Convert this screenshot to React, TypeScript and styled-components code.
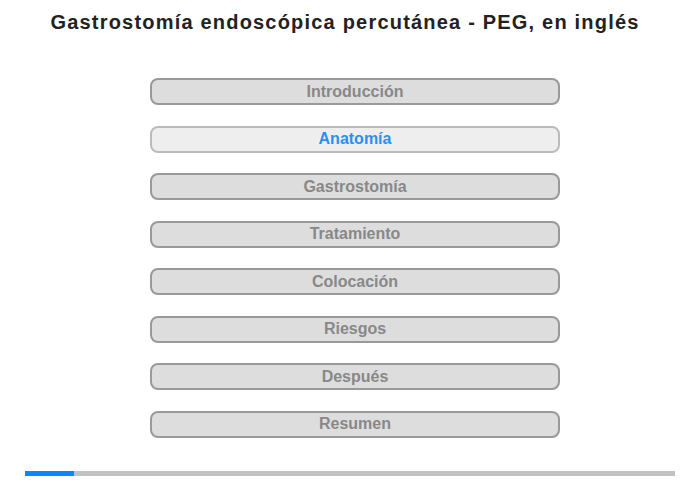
import React from "react";
import styled, { createGlobalStyle } from "styled-components";

const GlobalStyle = createGlobalStyle`
  html, body {
    margin: 0;
    padding: 0;
    background: #fff;
  }
  body {
    font-family: "Liberation Sans", Arial, sans-serif;
  }
`;

const Page = styled.div`
  width: 700px;
  height: 480px;
  display: flex;
  flex-direction: column;
  align-items: center;
  box-sizing: border-box;
  padding-top: 11px;
`;

const Title = styled.h1`
  margin: 0;
  padding-right: 10px;
  font-size: 20px;
  line-height: 23px;
  font-weight: bold;
  letter-spacing: 1.2px;
  color: #222;
  text-align: center;
  white-space: nowrap;
`;

const Menu = styled.ul`
  list-style: none;
  margin: 44px 0 0 10px;
  padding: 0;
  display: flex;
  flex-direction: column;
  gap: 20.5px;
`;

const Item = styled.li<{ $active?: boolean }>`
  width: 410px;
  height: 27px;
  box-sizing: border-box;
  border: 2px solid ${(p) => (p.$active ? "#bbb" : "#999")};
  border-radius: 8px;
  background: ${(p) => (p.$active ? "#eee" : "#ddd")};
  color: ${(p) => (p.$active ? "#2b8ff0" : "#888")};
  font-size: 16px;
  font-weight: bold;
  display: flex;
  align-items: center;
  justify-content: center;
  cursor: pointer;
`;

const Progress = styled.div`
  margin-top: 33.5px;
  width: 650px;
  height: 5px;
  background: #c2c2c2;
  display: flex;
`;

const ProgressFill = styled.div`
  height: 100%;
  background: #0788ff;
`;

const sections = [
  "Introducción",
  "Anatomía",
  "Gastrostomía",
  "Tratamiento",
  "Colocación",
  "Riesgos",
  "Después",
  "Resumen",
];

export default function App() {
  const current = 1;
  return (
    <>
      <GlobalStyle />
      <Page>
        <Title>Gastrostomía endoscópica percutánea - PEG, en inglés</Title>
        <Menu>
          {sections.map((s, i) => (
            <Item key={s} $active={i === current}>
              {s}
            </Item>
          ))}
        </Menu>
        <Progress>
          <ProgressFill style={{ width: `${(49 / 650) * 100}%` }} />
        </Progress>
      </Page>
    </>
  );
}
